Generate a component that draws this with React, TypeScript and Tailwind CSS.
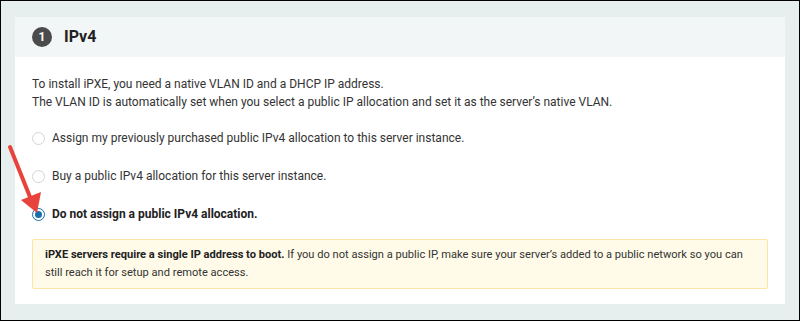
const font = { fontFamily: "Roboto, 'Liberation Sans', sans-serif" };

type Opt = { label: string; checked?: boolean };

const options: Opt[] = [
  { label: "Assign my previously purchased public IPv4 allocation to this server instance." },
  { label: "Buy a public IPv4 allocation for this server instance." },
  { label: "Do not assign a public IPv4 allocation.", checked: true },
];

function Radio({ checked }: { checked?: boolean }) {
  if (checked) {
    return (
      <span className="w-[13px] h-[13px] rounded-full border border-[#1a6fae] flex items-center justify-center bg-white shrink-0">
        <span className="w-[7px] h-[7px] rounded-full bg-[#1a6fae]" />
      </span>
    );
  }
  return <span className="w-[13px] h-[13px] rounded-full border border-[#d4d4d4] bg-white shrink-0" />;
}

export default function App() {
  return (
    <div
      className="relative w-[800px] h-[321px] bg-[#e7efee] border border-black pt-[16px] pl-[14px]"
      style={font}
    >
      <div className="w-[770px] h-[287px] bg-white flex flex-col">
        {/* header */}
        <div className="h-[40px] shrink-0 bg-[#f2f6f6] flex items-center pl-[17px] gap-[12px]">
          <span className="w-[20px] h-[20px] rounded-full bg-[#4b4b4b] text-white text-[12px] font-bold flex items-center justify-center">
            1
          </span>
          <span className="text-[16px] font-bold text-[#222]">IPv4</span>
        </div>

        {/* body */}
        <div className="pl-[17px] pr-[17px] pt-[18px] text-[12px] leading-[18px] text-[#333]">
          <p>To install iPXE, you need a native VLAN ID and a DHCP IP address.</p>
          <p>The VLAN ID is automatically set when you select a public IP allocation and set it as the server’s native VLAN.</p>

          <div className="mt-[18px] flex flex-col gap-[20px]">
            {options.map((o) => (
              <label key={o.label} className="flex items-center gap-[7px] h-[18px]">
                <Radio checked={o.checked} />
                <span className={o.checked ? "font-bold text-[#222]" : ""}>{o.label}</span>
              </label>
            ))}
          </div>

          <div className="mt-[16px] border border-[#fbe6a6] bg-[#fffbe8] rounded-[2px] px-[12px] py-[6px] text-[11.1px]">
            <p className="whitespace-nowrap">
              <span className="font-bold text-[#222]">iPXE servers require a single IP address to boot.</span>{" "}
              If you do not assign a public IP, make sure your server’s added to a public network so you can
            </p>
            <p>still reach it for setup and remote access.</p>
          </div>
        </div>
      </div>

      {/* annotation arrow */}
      <svg className="absolute left-0 top-0" width="60" height="230" viewBox="0 0 60 230">
        <line x1="9" y1="146" x2="29" y2="196" stroke="#e8423d" strokeWidth="4" strokeLinecap="round" />
        <polygon points="36,212 20,199 40,191" fill="#e8423d" />
      </svg>
    </div>
  );
}
